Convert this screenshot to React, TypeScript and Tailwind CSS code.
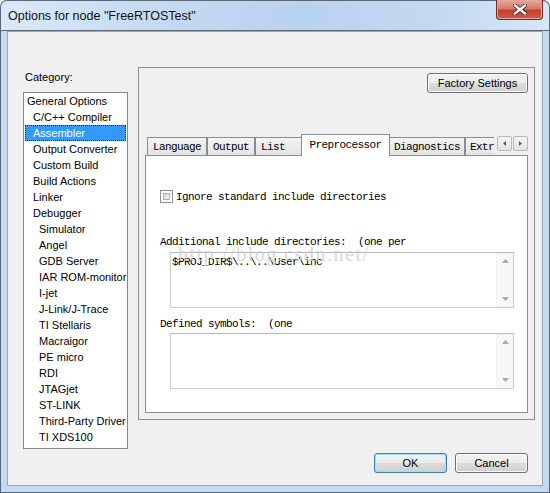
import React from 'react';

type Category = { label: string; level: number; selected?: boolean };

const categories: Category[] = [
  { label: 'General Options', level: 0 },
  { label: 'C/C++ Compiler', level: 1 },
  { label: 'Assembler', level: 1, selected: true },
  { label: 'Output Converter', level: 1 },
  { label: 'Custom Build', level: 1 },
  { label: 'Build Actions', level: 1 },
  { label: 'Linker', level: 1 },
  { label: 'Debugger', level: 1 },
  { label: 'Simulator', level: 2 },
  { label: 'Angel', level: 2 },
  { label: 'GDB Server', level: 2 },
  { label: 'IAR ROM-monitor', level: 2 },
  { label: 'I-jet', level: 2 },
  { label: 'J-Link/J-Trace', level: 2 },
  { label: 'TI Stellaris', level: 2 },
  { label: 'Macraigor', level: 2 },
  { label: 'PE micro', level: 2 },
  { label: 'RDI', level: 2 },
  { label: 'JTAGjet', level: 2 },
  { label: 'ST-LINK', level: 2 },
  { label: 'Third-Party Driver', level: 2 },
  { label: 'TI XDS100', level: 2 },
];

const indent = ['pl-[2px]', 'pl-[8px]', 'pl-[14px]'];

const ui = "font-['Liberation_Sans',Arial,sans-serif]";
const mono = "font-['Liberation_Mono','Courier_New',monospace] text-[11px] tracking-[-0.6px] whitespace-pre";

function WinButton({ label, width, focused }: { label: string; width: string; focused?: boolean }) {
  return (
    <button
      className={`${width} h-[20px] shrink-0 rounded-[3px] border ${
        focused
          ? 'border-[#3c7fb1] shadow-[inset_0_0_0_1px_#9ddcf8]'
          : 'border-[#707070] shadow-[inset_0_0_0_1px_#fbfbfb]'
      } bg-[linear-gradient(#f2f2f2_0%,#ebebeb_50%,#dddddd_50%,#cfcfcf_100%)] ${ui} whitespace-nowrap text-[11px] leading-none text-black`}
    >
      {label}
    </button>
  );
}

function TextArea({ text }: { text?: string }) {
  return (
    <div className="ml-[10px] flex h-[56px] w-[344px] border border-[#c9ccd1] border-t-[#b6b9be] bg-white">
      <div className={`flex-1 pl-[1px] pt-[2px] ${mono} leading-[14px] text-black`}>{text}</div>
      <div className="flex w-[17px] flex-col items-center justify-between border-l border-[#efefef] bg-[#f7f7f7] py-[6px]">
        <svg width="7" height="4" viewBox="0 0 7 4">
          <path d="M3.5 0 L7 4 L0 4 Z" fill="#a8a8a8" />
        </svg>
        <svg width="7" height="4" viewBox="0 0 7 4">
          <path d="M0 0 L7 0 L3.5 4 Z" fill="#a8a8a8" />
        </svg>
      </div>
    </div>
  );
}

function Tab({ label, width, active, className = '' }: { label: string; width: string; active?: boolean; className?: string }) {
  if (active) {
    return (
      <div
        className={`${width} relative z-10 flex h-[22px] shrink-0 items-start justify-center border border-b-0 border-[#898c95] bg-white pt-[3px] ${mono} leading-[14px] text-black ${className}`}
      >
        {label}
      </div>
    );
  }
  return (
    <div
      className={`${width} mt-[3px] flex h-[18px] shrink-0 items-center justify-center border border-b-0 border-[#898c95] bg-[linear-gradient(#f4f4f4,#e3e3e3)] ${mono} leading-[14px] text-black ${className}`}
    >
      {label}
    </div>
  );
}

function ScrollArrow({ dir }: { dir: 'left' | 'right' }) {
  return (
    <div className="flex h-[15px] w-[15px] items-center justify-center rounded-[2px] border border-[#b9b9b9] bg-[linear-gradient(#f6f6f6,#e2e2e2)]">
      <svg width="3" height="5" viewBox="0 0 3 5">
        {dir === 'left' ? <path d="M3 0 L0 2.5 L3 5 Z" fill="#4a5a78" /> : <path d="M0 0 L3 2.5 L0 5 Z" fill="#4a5a78" />}
      </svg>
    </div>
  );
}

export default function App() {
  return (
    <div className="relative flex h-[493px] w-[550px] flex-col overflow-hidden rounded-t-[7px] bg-[#c4daf2] shadow-[inset_0_0_0_1px_#5a6877]">
      {/* title bar */}
      <div className="flex h-[31px] shrink-0 items-start rounded-t-[7px] bg-[linear-gradient(90deg,#dbe9f9_0%,#c6dcf3_25%,#b9d2ee_55%,#c4daf2_80%,#d6e6f7_100%)] shadow-[inset_0_0_0_1px_#5a6877]">
        <div className={`mt-[9px] pl-[8px] ${ui} text-[12.5px] leading-[14px] text-[#111]`}>
          Options for node "FreeRTOSTest"
        </div>
        <div className="ml-auto mr-[7px] flex h-[20px] w-[47px] items-center justify-center rounded-b-[4px] border border-t-0 border-[#6e2a22] bg-[linear-gradient(#e9a99e_0%,#d67a6c_45%,#c1412f_55%,#cf5d4b_100%)] shadow-[inset_0_0_0_1px_#eaa598]">
          <svg width="14" height="11" viewBox="0 0 14 11">
            <path d="M2 1.5 L12 9.5 M12 1.5 L2 9.5" stroke="#4a1f1a" strokeWidth="4.2" strokeLinecap="square" />
            <path d="M2 1.5 L12 9.5 M12 1.5 L2 9.5" stroke="#ffffff" strokeWidth="2.4" strokeLinecap="square" />
          </svg>
        </div>
      </div>

      {/* client area */}
      <div className="mx-[7px] mb-[7px] flex flex-1 border border-[#97a6b8] bg-[#f0f0f0] pl-[15px] pr-[7px] pt-[35px]">
        {/* category column */}
        <div className="flex w-[105px] shrink-0 flex-col">
          <div className={`mt-[3px] pl-[2px] ${ui} text-[11px] leading-[14px] text-black`}>Category:</div>
          <div className="mt-[8px] h-[357px] overflow-hidden border border-[#828790] bg-white">
            {categories.map((c) => (
              <div
                key={c.label}
                className={`mx-[1px] h-[16px] whitespace-nowrap ${indent[c.level]} ${ui} text-[11px] ${
                  c.selected ? 'border border-dotted border-[#1c2a3a] bg-[#3399ff] leading-[14px] text-white' : 'leading-[16px] text-black'
                }`}
              >
                <span className={c.selected ? '-ml-[1px]' : ''}>{c.label}</span>
              </div>
            ))}
          </div>
        </div>

        {/* right column */}
        <div className="ml-[10px] flex w-[397px] shrink-0 flex-col">
          <div className="flex h-[353px] flex-col border border-[#8e8e8e] px-[6px] pb-[6px] pt-[5px]">
            <div className="flex justify-end">
              <WinButton label="Factory Settings" width="w-[101px]" />
            </div>

            {/* tab strip */}
            <div className="relative z-10 mt-[41px] flex h-[22px] shrink-0">
              <div className="flex min-w-0 flex-1 overflow-hidden pl-[2px]">
                <Tab label="Language" width="w-[60px]" />
                <Tab label="Output" width="w-[48px]" />
                <Tab label="List" width="w-[48px]" className="justify-start pl-[5px]" />
                <Tab label="Preprocessor" width="w-[89px]" active className="-ml-[2px]" />
                <Tab label="Diagnostics" width="w-[76px]" className="-ml-[1px]" />
                <Tab label="Extra Options" width="w-[90px]" className="justify-start pl-[4px]" />
              </div>
              <div className="relative z-10 -ml-[3px] flex h-[20px] shrink-0 gap-[1px] bg-[#f0f0f0] pl-[3px] pt-[2px]">
                <ScrollArrow dir="left" />
                <ScrollArrow dir="right" />
              </div>
            </div>

            {/* tab page */}
            <div className="relative -mt-[1px] flex flex-1 flex-col border border-[#898c95] bg-white pl-[14px]">
              <div className="mt-[34px] flex h-[13px] items-center">
                <div className="h-[13px] w-[13px] border border-[#8e8f8f] bg-white p-[2px]">
                  <div className="h-full w-full border border-[#b0b0b0] bg-[linear-gradient(135deg,#d2d2d2,#f4f4f4)]" />
                </div>
                <span className={`ml-[3px] ${mono} leading-[14px] text-black`}>Ignore standard include directories</span>
              </div>

              <div className={`mt-[32px] ${mono} leading-[14px] text-black`}>Additional include directories:  (one per</div>
              <div className="mt-[3px]">
                <TextArea text="$PROJ_DIR$\..\..\User\inc" />
              </div>

              <div className={`mt-[9px] ${mono} leading-[14px] text-black`}>Defined symbols:  (one</div>
              <div className="mt-[2px]">
                <TextArea />
              </div>

              <div className="pointer-events-none absolute left-[32px] top-[88px] font-['Liberation_Serif','Times_New_Roman',serif] text-[20px] leading-[20px] tracking-[1.5px] text-[#cfcfcf] opacity-80">
                http://blog.csdn.net/
              </div>
            </div>
          </div>

          <div className="mt-[33px] flex justify-end gap-[8px] pr-[7px]">
            <WinButton label="OK" width="w-[73px]" focused />
            <WinButton label="Cancel" width="w-[73px]" />
          </div>
        </div>
      </div>
    </div>
  );
}
